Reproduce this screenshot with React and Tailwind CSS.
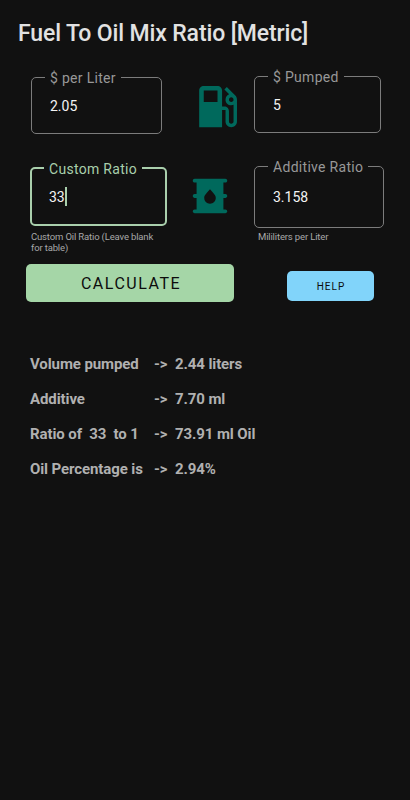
import React from "react";
import { clsx } from "clsx";

const results = [
  { label: "Volume pumped", value: "2.44 liters" },
  { label: "Additive", value: "7.70 ml" },
  { label: "Ratio of  33  to 1", value: "73.91 ml Oil" },
  { label: "Oil Percentage is", value: "2.94%" },
];

function PumpIcon({ className }) {
  return (
    <svg viewBox="0 0 24 24" fill="currentColor" className={className} aria-hidden="true">
      <path d="M19.77 7.23l.01-.01-3.72-3.72L15 4.56l2.11 2.11c-.94.36-1.61 1.26-1.61 2.33 0 1.38 1.12 2.5 2.5 2.5.36 0 .69-.08 1-.21v7.21c0 .55-.45 1-1 1s-1-.45-1-1V14c0-1.1-.9-2-2-2h-1V5c0-1.1-.9-2-2-2H6c-1.1 0-2 .9-2 2v16h10v-7.5h1.5v5c0 1.38 1.12 2.5 2.5 2.5s2.5-1.12 2.5-2.5V9c0-.69-.28-1.32-.73-1.77zM12 10H6V5h6v5zm6 0c-.55 0-1-.45-1-1s.45-1 1-1 1 .45 1 1-.45 1-1 1z" />
    </svg>
  );
}

function BarrelIcon({ className }) {
  return (
    <svg viewBox="0 0 24 24" fill="currentColor" className={className} aria-hidden="true">
      <path d="M20 13c.55 0 1-.45 1-1s-.45-1-1-1h-1V5h1c.55 0 1-.45 1-1s-.45-1-1-1H4c-.55 0-1 .45-1 1s.45 1 1 1h1v6H4c-.55 0-1 .45-1 1s.45 1 1 1h1v6H4c-.55 0-1 .45-1 1s.45 1 1 1h16c.55 0 1-.45 1-1s-.45-1-1-1h-1v-6h1zm-8 3c-1.66 0-3-1.32-3-2.95 0-1.3.52-1.67 3-4.55 2.47 2.86 3 3.24 3 4.55 0 1.63-1.34 2.95-3 2.95z" />
    </svg>
  );
}

function Field({ label, value, active, className, valueClass }) {
  return (
    <fieldset
      className={clsx(
        "rounded-[5px]",
        active ? "border-2 border-[#a9cfac] pl-[12px]" : "border border-[#7c7c7c] pl-[13px]",
        className
      )}
    >
      <legend className={clsx("px-[5px] pt-[2px] text-[14px] leading-[14px] tracking-[0.3px] whitespace-nowrap", active ? "text-[#a9cfac]" : "text-[#989898]")}>{label}</legend>
      <div className={clsx("flex items-center pl-[5px] text-[14px] leading-[18px] text-[#f4f4f4]", valueClass)}>
        {value}
        {active && <span className="h-[19px] w-[2px] bg-[#a9cfac]" />}
      </div>
    </fieldset>
  );
}

export default function App() {
  return (
    <main className="h-[800px] w-[410px] overflow-hidden bg-[#111111] font-[Roboto,sans-serif]">
      <h1 className="pt-[20px] pl-[18px] text-[23px] leading-[28px] font-medium tracking-[-0.13px] whitespace-nowrap text-[#e2e2e2]">Fuel To Oil Mix Ratio [Metric]</h1>

      <section className="mt-[19px] flex h-[92px] items-start pl-[31px]">
        <Field label="$ per Liter" value="2.05" className="mt-[2px] h-[65px] w-[131px]" valueClass="pt-[12px]" />
        <PumpIcon className="mt-[12px] ml-[28px] size-[55px] text-[#00695c]" />
        <Field label="$ Pumped" value="5" className="mt-px ml-[9px] h-[65px] w-[127px]" valueClass="pt-[12px]" />
      </section>

      <section className="flex h-[105px] items-start pl-[30px]">
        <div className="w-[137px]">
          <Field label="Custom Ratio" value="33" active className="mt-px h-[66px] w-[137px]" valueClass="pt-[11px]" />
          <p className="mt-[6px] pl-[1px] text-[9.5px] leading-[10.5px] tracking-[-0.15px] whitespace-nowrap text-[#a8a8a8]">
            Custom Oil Ratio (Leave blank
            <br />
            for table)
          </p>
        </div>
        <BarrelIcon className="mt-[14px] ml-[20px] size-[46px] text-[#00695c]" />
        <div className="ml-[21px]">
          <Field label="Additive Ratio" value="3.158" className="-mt-px h-[70px] w-[130px]" valueClass="pt-[14px]" />
          <p className="mt-[3px] pl-[4px] text-[9.5px] leading-[12px] tracking-[-0.15px] text-[#a8a8a8]">Mililiters per Liter</p>
        </div>
      </section>

      <section className="flex items-center pl-[26px]">
        <button className="h-[38px] w-[208px] rounded-[5px] bg-[#a5d6a7] pt-[2px] pl-[2px] text-[16px] tracking-[1.5px] text-[#0c0c0c]">CALCULATE</button>
        <button className="mt-[6px] ml-[53px] h-[30px] w-[87px] rounded-[5px] bg-[#81d4fa] pl-px text-[10px] tracking-[1px] text-[#0c0c0c]">HELP</button>
      </section>

      <dl className="mt-[45px] pl-[30px] text-[15px] leading-[35px] font-bold tracking-[-0.1px] text-[#b0b0b0]">
        {results.map((row) => (
          <div key={row.label} className="flex">
            <dt className="w-[124px] whitespace-pre">{row.label}</dt>
            <dd className="flex">
              <span className="w-[21px]">-&gt;</span>
              {row.value}
            </dd>
          </div>
        ))}
      </dl>
    </main>
  );
}
